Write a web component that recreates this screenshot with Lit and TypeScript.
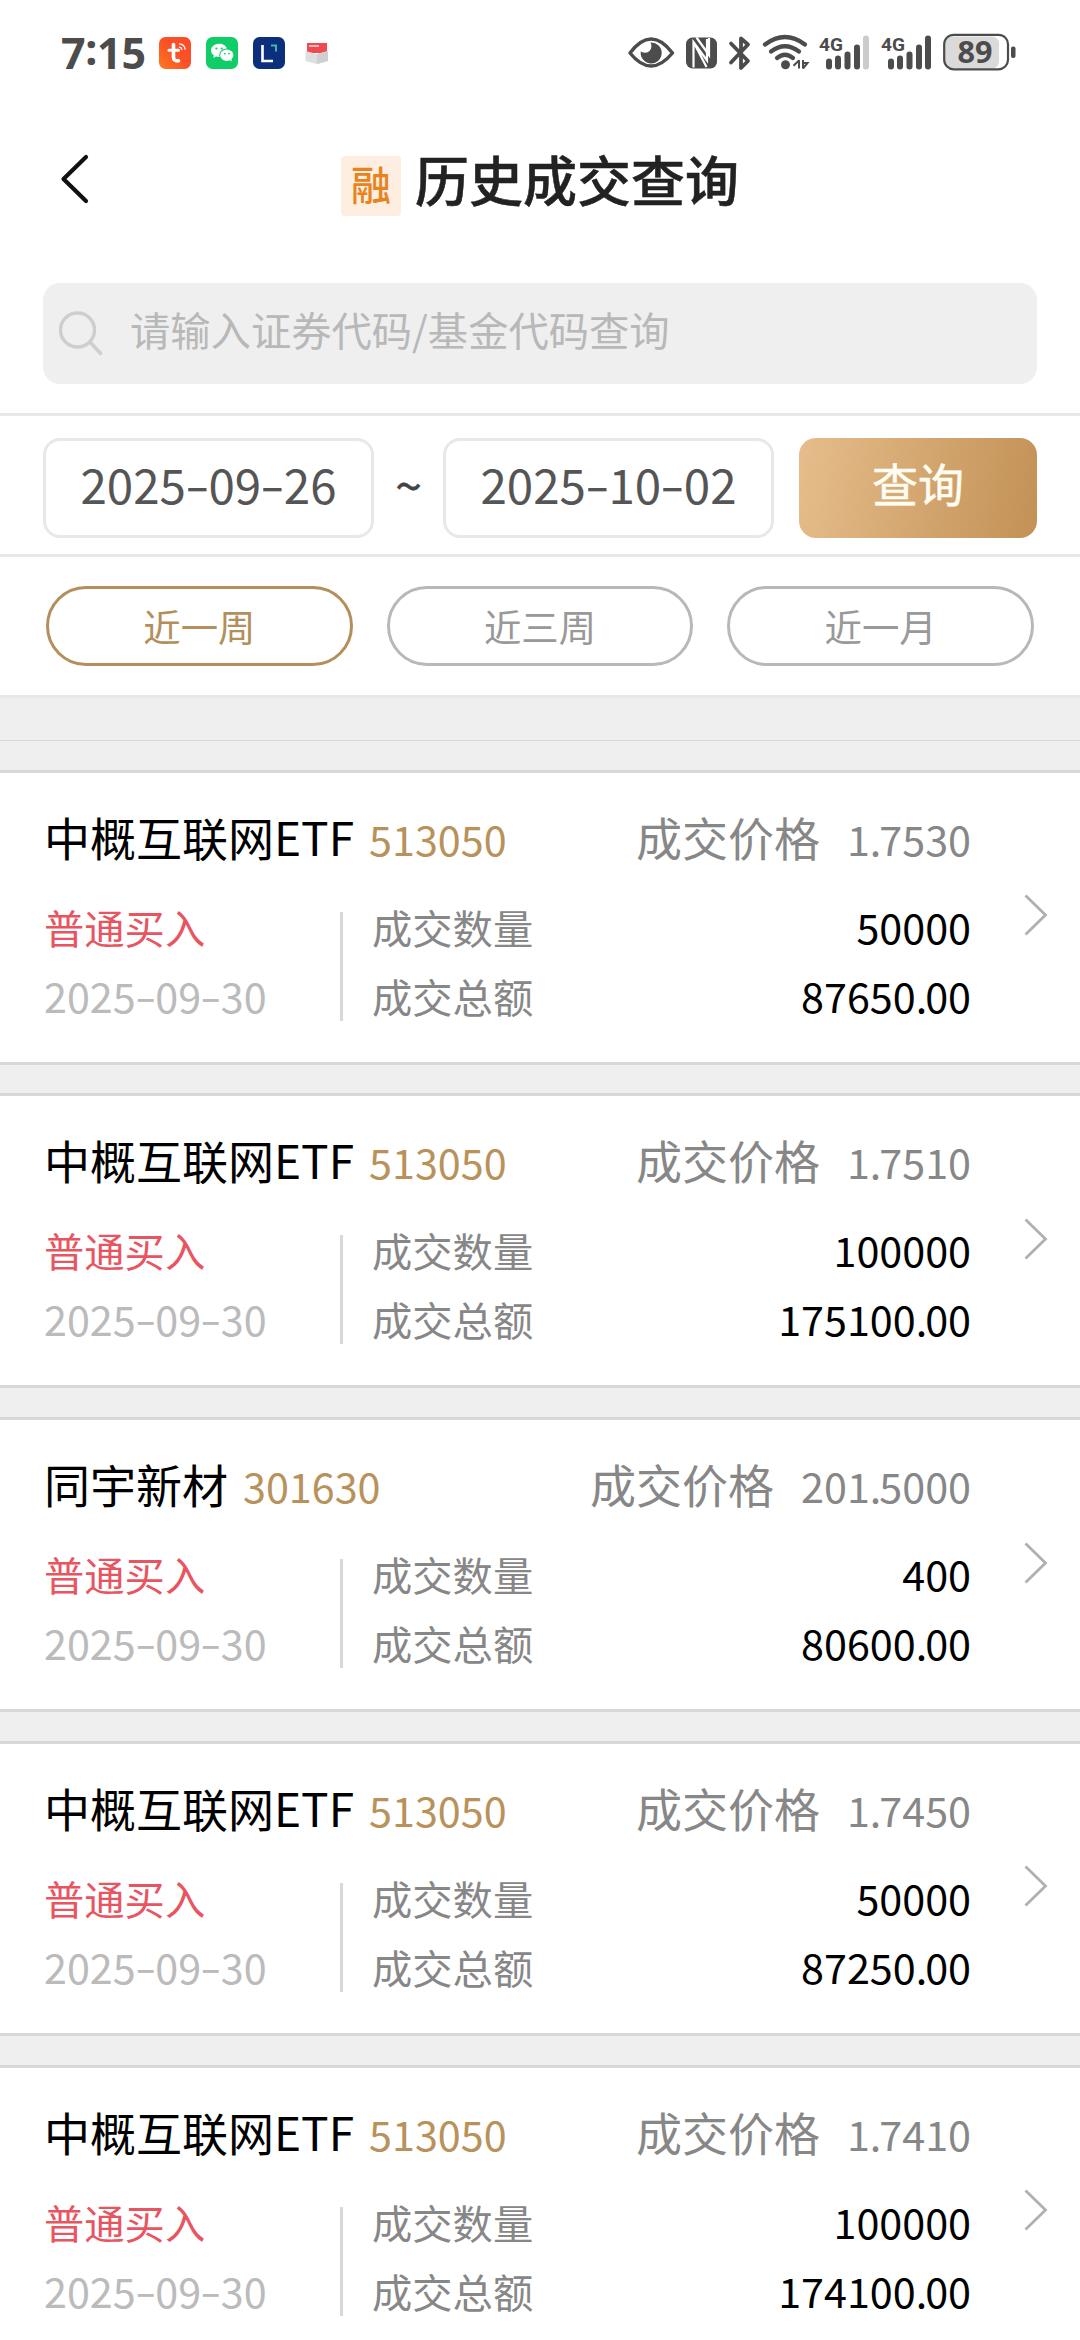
import { LitElement, html, css, svg } from "lit";
import { customElement, property, state } from "lit/decorators.js";
import { classMap } from "lit/directives/class-map.js";

interface Deal {
  name: string;
  code: string;
  price: string;
  side: string;
  date: string;
  volume: string;
  amount: string;
}

const DEALS: Deal[] = [
  { name: "中概互联网ETF", code: "513050", price: "1.7530", side: "普通买入", date: "2025-09-30", volume: "50000", amount: "87650.00" },
  { name: "中概互联网ETF", code: "513050", price: "1.7510", side: "普通买入", date: "2025-09-30", volume: "100000", amount: "175100.00" },
  { name: "同宇新材", code: "301630", price: "201.5000", side: "普通买入", date: "2025-09-30", volume: "400", amount: "80600.00" },
  { name: "中概互联网ETF", code: "513050", price: "1.7450", side: "普通买入", date: "2025-09-30", volume: "50000", amount: "87250.00" },
  { name: "中概互联网ETF", code: "513050", price: "1.7410", side: "普通买入", date: "2025-09-30", volume: "100000", amount: "174100.00" },
];

@customElement("date-text")
export class DateText extends LitElement {
  @property() value = "";
  static styles = css`
    :host { display: inline-block; white-space: nowrap; }
    .dash { display: inline-block; width: 0.475em; text-align: center; transform: translateY(-0.02em) scaleX(1.5); }
  `;
  render() {
    return html`${this.value.split("-").map((p, i) => (i ? html`<span class="dash">-</span>${p}` : p))}`;
  }
}

@customElement("status-bar")
export class StatusBar extends LitElement {
  static styles = css`
    :host { display: flex; justify-content: space-between; height: 105px; padding: 0 64px 0 61px; box-sizing: border-box; color: #4c4c4c; }
    .group { display: flex; align-items: center; height: 105px; }
    .time { font: 700 43px/60px "Noto Sans", sans-serif; width: 98px; letter-spacing: -0.3px; }
    .colon { position: relative; top: -4px; }
    .apps { gap: 15px; }
    .apps .time { margin-right: -15px; }
    svg { display: block; flex: none; }
    .sig { font: 700 19px "Roboto", sans-serif; fill: #4c4c4c; }
    .pct { font: 700 30px "Noto Sans", sans-serif; fill: #4c4c4c; }
  `;
  private signal(last: string) {
    return svg`
      <text class="sig" x="0" y="16.500" textLength="24" lengthAdjust="spacingAndGlyphs">4G</text>
      <rect x="7" y="24" width="6" height="11" rx="3" />
      <rect x="16" y="21" width="6" height="14" rx="3" />
      <rect x="25.5" y="17" width="6" height="18" rx="3" />
      <rect x="35" y="10" width="6" height="25" rx="3" />
      <rect x="44" y="1" width="6" height="34" rx="3" fill=${last} />`;
  }
  render() {
    return html`
      <div class="group apps">
        <span class="time">7<span class="colon">:</span>15</span>
        <svg width="32" height="32" viewBox="0 0 32 32">
          <defs><linearGradient id="o" x1="0" y1="1" x2="1" y2="0"><stop offset="0" stop-color="#ff7a1f" /><stop offset=".5" stop-color="#fb5127" /><stop offset="1" stop-color="#ff4a26" /></linearGradient></defs>
          <rect width="32" height="32" rx="6.5" fill="url(#o)" />
          <g fill="none" stroke="#fff" stroke-linecap="round">
            <path d="M14.5 7.5V20q0 4.3 5 3.8" stroke-width="3.6" /><path d="M10 13.2h9.5" stroke-width="3" />
            <path d="M20.5 10.2q2 .2 2.3 2.2M20.5 6.8q5 .4 5.6 5.4" stroke-width="1.3" />
          </g>
        </svg>
        <svg width="32" height="32" viewBox="0 0 32 32">
          <rect width="32" height="32" rx="6.5" fill="#0fce68" />
          <path d="M13 6.700c-4.500 0-8 3-8 6.600 0 2.100 1.100 3.900 2.900 5.100l-.8 2.600 3-1.500c.9.300 1.900.4 2.900.4h.6c-1.300-5 2.500-8.500 7.200-8.500C20 8.500 16.800 6.700 13 6.700Z" fill="#fff" />
          <ellipse cx="20.800" cy="18.200" rx="6.600" ry="5.700" fill="#fff" /><path d="M22 22l3.800 2.500-.7-3.600Z" fill="#fff" />
          <g fill="#0fce68"><circle cx="10.400" cy="11.500" r="1.100" /><circle cx="15.700" cy="11.500" r="1.100" /><circle cx="18.700" cy="16.600" r=".9" /><circle cx="23" cy="16.600" r=".9" /></g>
        </svg>
        <svg width="32" height="32" viewBox="0 0 32 32">
          <rect width="32" height="32" rx="6.500" fill="#0b2f7d" />
          <path d="M9.500 8v16H20" fill="none" stroke="#fff" stroke-width="2.600" /><path d="M18 8.500h5v6" fill="none" stroke="#3fb8ac" stroke-width="2" />
        </svg>
        <svg width="44" height="32" viewBox="0 0 44 32">
          <path d="M7 6h20v10H7Z" fill="#ee4a50" /><path d="M9 9h10" stroke="#fff" stroke-width="1.200" />
          <path d="M5.500 14L17 17l11-3v10L17 27 5.500 24Z" fill="#dedede" /><path d="M17 17l11-3v10L17 27Z" fill="#cfcfcf" />
        </svg>
      </div>
      <div class="group">
        <svg width="388" height="60" viewBox="0 -10 388 60" fill="#4c4c4c">
          <path d="M2 20Q23 -8 44.500 20Q23 46 2 20Z" fill="none" stroke="#4c4c4c" stroke-width="3.400" stroke-linejoin="round" />
          <path d="M22.500 9.500a10.500 10.500 0 1 1-9.700 9q5.500 2.800 9-.8 2.800-3.700.7-8.200Z" />
          <rect x="58" y="4.500" width="31" height="31" rx="6.500" />
          <path d="M65.500 34.500V9l13.500 18.500V6M65.500 9l13 25" fill="none" stroke="#fff" stroke-width="2.200" />
          <path d="M68.500 4.500L81 22V5" fill="none" stroke="#fff" stroke-width="2.200" />
          <path d="M103 10.500L120 28l-7 7V5.500l7 6L103 29.500" fill="none" stroke="#4c4c4c" stroke-width="3.800" stroke-linejoin="round" stroke-linecap="round" />
          <g fill="none" stroke="#4c4c4c" stroke-width="4.200" stroke-linecap="round">
            <path d="M137 11.500q20-15 40 0" /><path d="M143 18.500q14-10.500 28 0" /><path d="M149 25q8-6.500 16 0" />
          </g>
          <circle cx="157.500" cy="31.800" r="4.500" />
          <path d="M171 27v8.500M165.500 32.800l5.500-5.300M175 35.500V27M175 30l4.500 0-4.500 5.500" stroke="#4c4c4c" stroke-width="2" fill="none" />
          <g transform="translate(191 1.500)">${this.signal("#cbcbcb")}</g>
          <g transform="translate(253 1.500)">${this.signal("#4c4c4c")}</g>
          <rect x="317" y="3.500" width="54" height="32" rx="7" fill="#dadada" />
          <rect x="316.200" y="1.800" width="63.800" height="34.500" rx="9.500" fill="none" stroke="#4c4c4c" stroke-width="2.200" />
          <rect x="383" y="13.500" width="4.500" height="11.500" rx="2" />
          <text class="pct" x="329.500" y="30" textLength="35" lengthAdjust="spacingAndGlyphs">89</text>
        </svg>
      </div>
    `;
  }
}

@customElement("deal-card")
export class DealCard extends LitElement {
  @property({ attribute: false }) deal!: Deal;
  static styles = css`
    :host { display: block; background: #fff; border-top: 3px solid #d8d8d8; border-bottom: 3px solid #d8d8d8; padding: 33px 32px 32px 44px; }
    .row { display: flex; align-items: center; justify-content: space-between; }
    .main { width: 927px; }
    .head { display: flex; align-items: baseline; height: 60px; line-height: 60px; color: #878787; }
    .name { font-size: 46px; color: #000; }
    .code { font-size: 41.300px; color: #b8925a; margin-left: 15px; }
    .label { font-size: 46px; margin-left: auto; margin-right: 27px; }
    .price { font-size: 41.300px; }
    .point { margin-right: -2px; }
    .body { display: flex; margin-top: 26px; line-height: 69px; font-size: 40.300px; }
    .left { width: 296px; }
    .side { color: #e8545f; }
    .date { color: #bbb; font-size: 41.300px; display: block; }
    .bar { width: 3px; height: 109px; margin: 20px 29px 0 0; background: #d8d8d8; }
    .right { flex: 1; color: #878787; }
    .pair { display: flex; justify-content: space-between; height: 69px; }
    .value { color: #000; font-size: 41.300px; }
    .go { display: block; margin-top: -5px; }
  `;
  private figure(value: string) {
    const [whole, fraction] = value.split(".");
    return fraction ? html`${whole}<span class="point">.</span>${fraction}` : whole;
  }
  render() {
    const d = this.deal;
    return html`
      <div class="row">
        <div class="main">
          <div class="head">
            <span class="name">${d.name}</span><span class="code">${d.code}</span>
            <span class="label">成交价格</span><span class="price">${this.figure(d.price)}</span>
          </div>
          <div class="body">
            <div class="left">
              <div class="side">${d.side}</div>
              <date-text class="date" .value=${d.date}></date-text>
            </div>
            <div class="bar"></div>
            <div class="right">
              <div class="pair"><span>成交数量</span><span class="value">${this.figure(d.volume)}</span></div>
              <div class="pair"><span>成交总额</span><span class="value">${this.figure(d.amount)}</span></div>
            </div>
          </div>
        </div>
        <svg class="go" width="24" height="44" viewBox="0 0 24 44"><path d="M1.500 2.500L21.500 22L1.500 41.500" fill="none" stroke="#b0b0b0" stroke-width="2.800" /></svg>
      </div>
    `;
  }
}

@customElement("app-root")
export class AppRoot extends LitElement {
  @state() private range = 0;
  private ranges = ["近一周", "近三周", "近一月"];

  static styles = css`
    :host { display: block; width: 1080px; height: 2340px; overflow: hidden; background: #efefef; font-family: "Noto Sans CJK SC", sans-serif; color: #222; }
    .top { background: #fff; }
    .nav { display: grid; grid-template-columns: 1fr auto 1fr; align-items: center; height: 150px; padding: 0 60px; }
    .title { display: flex; align-items: center; gap: 14px; font-size: 54px; font-weight: 500; line-height: 80px; }
    .heading { margin-top: -2px; -webkit-text-stroke: 0.500px #222; }
    .tag { width: 60px; height: 60px; margin-top: 12px; border-radius: 4px; background: #fdeee1; color: #e78420; font-size: 40px; line-height: 55px; text-align: center; }
    .search { display: flex; align-items: center; gap: 27px; height: 101px; margin: 28px 43px 29px; padding-left: 16px; border-radius: 17px; background: #efefef; box-sizing: border-box; color: #b8b8b8; font-size: 40.300px; }
    .hint { margin-top: -10px; margin-left: -1px; }
    .dates { display: flex; align-items: center; height: 138px; border-top: 3px solid #e8e8e8; border-bottom: 3px solid #e8e8e8; padding: 0 43px; }
    .field { display: flex; align-items: center; justify-content: center; width: 331px; height: 100px; box-sizing: border-box; border: 3px solid #e8e8e8; border-radius: 17px; color: #555; font-size: 47.500px; line-height: 94px; margin-top: 6px; }
    .field date-text { margin-top: -9px; }
    .tilde { width: 69px; text-align: center; font-size: 48px; color: #444; line-height: 60px; margin-top: -5px; -webkit-text-stroke: 0.500px #444; }
    .query { width: 238px; height: 100px; margin: 6px 0 0 25px; border-radius: 17px; background: linear-gradient(100deg, #e6bd8b, #c29156); color: #fffdf2; font-size: 46px; line-height: 89px; text-align: center; -webkit-text-stroke: 0.500px #fffdf2; }
    .chips { display: flex; gap: 34px; padding: 29px 46px; border-bottom: 3px solid #e8e8e8; }
    .chip { flex: 1; box-sizing: border-box; height: 80px; border: 3px solid #b8b8b8; border-radius: 40px; color: #999; font-size: 37.400px; line-height: 75px; text-align: center; }
    .chip.on { border-color: #b28f5b; color: #b28f5b; }
    .spacer { height: 42px; border-bottom: 1px solid #d8d8d8; }
    .list { display: flex; flex-direction: column; gap: 28.800px; padding-top: 28.600px; }
  `;

  render() {
    return html`
      <div class="top">
        <status-bar></status-bar>
        <div class="nav">
          <svg width="30" height="52" viewBox="0 0 30 52"><path d="M26 3L3.500 25L26 47" fill="none" stroke="#111" stroke-width="4.200" stroke-linecap="round" stroke-linejoin="round" /></svg>
          <div class="title"><span class="tag">融</span><span class="heading">历史成交查询</span></div>
          <span></span>
        </div>
        <div class="search">
          <svg width="45" height="46" viewBox="0 0 45 46"><circle cx="18.500" cy="19" r="17" fill="none" stroke="#cecece" stroke-width="3.400" /><path d="M31 31l11.500 12.500" stroke="#cecece" stroke-width="3.400" /></svg>
          <span class="hint">请输入证券代码/基金代码查询</span>
        </div>
        <div class="dates">
          <div class="field"><date-text .value=${"2025-09-26"}></date-text></div>
          <span class="tilde">~</span>
          <div class="field"><date-text .value=${"2025-10-02"}></date-text></div>
          <div class="query">查询</div>
        </div>
        <div class="chips">
          ${this.ranges.map(
            (r, i) => html`<div class=${classMap({ chip: true, on: i === this.range })} @click=${() => (this.range = i)}>${r}</div>`
          )}
        </div>
      </div>
      <div class="spacer"></div>
      <div class="list">${DEALS.map((d) => html`<deal-card .deal=${d}></deal-card>`)}</div>
    `;
  }
}
